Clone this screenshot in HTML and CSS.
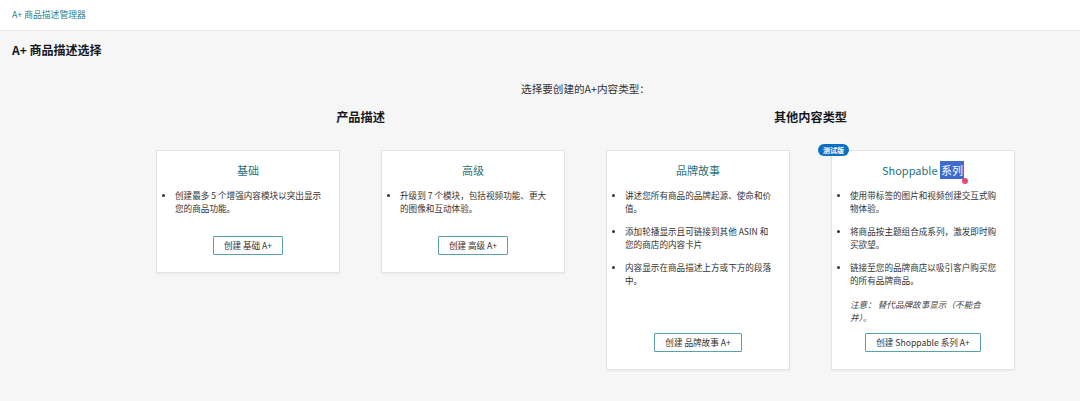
FILE: index.html
```html
<!DOCTYPE html>
<html lang="zh-CN">
<head>
    <meta charset="UTF-8">
    <meta name="viewport" content="width=device-width, initial-scale=1.0">
    <title>A+ 商品描述管理器</title>
    <link rel="stylesheet" href="styles.css">
</head>
<body>
    <header class="top-bar">
        <a href="#" class="top-link">A+ 商品描述管理器</a>
    </header>

    <main>
        <h1 class="page-title">A+ 商品描述选择</h1>

        <section class="chooser">
            <p class="prompt">选择要创建的A+内容类型：</p>

            <div class="groups">
                <div class="group">
                    <h2 class="group-title">产品描述</h2>
                    <div class="cards">
                        <div class="card">
                            <h3 class="card-title">基础</h3>
                            <ul class="card-list">
                                <li>创建最多 5 个增强内容模块以突出显示您的商品功能。</li>
                            </ul>
                            <div class="card-action">
                                <button class="btn-outline">创建 基础 A+</button>
                            </div>
                        </div>
                        <div class="card">
                            <h3 class="card-title">高级</h3>
                            <ul class="card-list">
                                <li>升级到 7 个模块，包括视频功能、更大的图像和互动体验。</li>
                            </ul>
                            <div class="card-action">
                                <button class="btn-outline">创建 高级 A+</button>
                            </div>
                        </div>
                    </div>
                </div>

                <div class="group">
                    <h2 class="group-title">其他内容类型</h2>
                    <div class="cards">
                        <div class="card">
                            <h3 class="card-title">品牌故事</h3>
                            <ul class="card-list">
                                <li>讲述您所有商品的品牌起源、使命和价值。</li>
                                <li>添加轮播显示且可链接到其他 ASIN 和您的商店的内容卡片</li>
                                <li>内容显示在商品描述上方或下方的段落中。</li>
                            </ul>
                            <div class="card-action">
                                <button class="btn-outline">创建 品牌故事 A+</button>
                            </div>
                        </div>
                        <div class="card card-beta">
                            <span class="beta-badge">测试版</span>
                            <h3 class="card-title">Shoppable <span class="selected">系列</span></h3>
                            <ul class="card-list">
                                <li>使用带标签的图片和视频创建交互式购物体验。</li>
                                <li>将商品按主题组合成系列，激发即时购买欲望。</li>
                                <li>链接至您的品牌商店以吸引客户购买您的所有品牌商品。</li>
                            </ul>
                            <p class="card-note">注意： 替代品牌故事显示（不能合并）。</p>
                            <div class="card-action">
                                <button class="btn-outline">创建 Shoppable 系列 A+</button>
                            </div>
                        </div>
                    </div>
                </div>
            </div>
        </section>
    </main>
</body>
</html>
```

FILE: styles.css
```css
* {
    margin: 0;
    padding: 0;
    box-sizing: border-box;
}

body {
    font-family: "Noto Sans CJK SC", "Noto Sans", sans-serif;
    color: #333;
    background: #f6f6f6;
    min-height: 100vh;
}

.top-bar {
    height: 31px;
    background: #fff;
    border-bottom: 1px solid #e6e6e6;
    padding-left: 12px;
    display: flex;
    align-items: center;
}

.top-link {
    font-size: 8.8px;
    color: #2c7f8c;
    text-decoration: none;
    line-height: 1;
}

.page-title {
    font-size: 12px;
    font-weight: bold;
    line-height: 16px;
    color: #16191f;
    margin: 11px 12px 0;
}

.chooser {
    width: 859px;
    margin-left: 156px;
}

.prompt {
    text-align: center;
    font-size: 10.6px;
    line-height: 14px;
    color: #333;
    margin-top: 24px;
}

.groups {
    display: flex;
    gap: 41px;
    align-items: flex-start;
}

.group {
    width: 409px;
}

.group-title {
    text-align: center;
    font-size: 12.2px;
    font-weight: bold;
    line-height: 16px;
    color: #16191f;
    margin: 13px 0 25px;
}

.cards {
    display: flex;
    gap: 41px;
}

.card {
    position: relative;
    width: 184px;
    background: #fff;
    border: 1px solid #e3e3e3;
    box-shadow: 0 1px 2px rgba(0, 0, 0, 0.05);
    padding: 11px 8px 17px;
    display: flex;
    flex-direction: column;
}

.card-title {
    text-align: center;
    font-size: 11px;
    font-weight: normal;
    line-height: 16px;
    color: #2a737d;
}

.selected {
    position: relative;
    background: #3d6bd0;
    color: #fff;
    padding: 1px 1px;
}

.selected::after {
    content: "";
    position: absolute;
    right: -4px;
    top: 17px;
    width: 6px;
    height: 6px;
    border-radius: 50%;
    background: #e8467c;
}

.card-list {
    margin: 11px 7px 0 0;
    padding-left: 10px;
    font-size: 8.6px;
    line-height: 13px;
    color: #333;
}

.card-list li {
    margin-bottom: 10px;
}

.card-list li::marker {
    font-size: 8px;
}

.card-note {
    margin: 1px 20px 0 10px;
    font-size: 8.6px;
    line-height: 13px;
    font-style: italic;
    color: #444;
}

.card-note + .card-action {
    padding-top: 9px;
}

.card-action {
    margin-top: auto;
    padding-top: 11px;
    display: flex;
    justify-content: center;
}

.btn-outline {
    font-family: inherit;
    font-size: 8.6px;
    line-height: 17px;
    height: 19px;
    padding: 0 10px;
    color: #333;
    background: #fff;
    border: 1px solid #5aa1ab;
    border-radius: 1px;
}

.beta-badge {
    position: absolute;
    left: -14px;
    top: -7px;
    height: 12px;
    padding: 0 5px;
    border-radius: 7px;
    background: #0b6fc4;
    color: #fff;
    font-size: 7px;
    font-weight: bold;
    line-height: 12px;
}
```
